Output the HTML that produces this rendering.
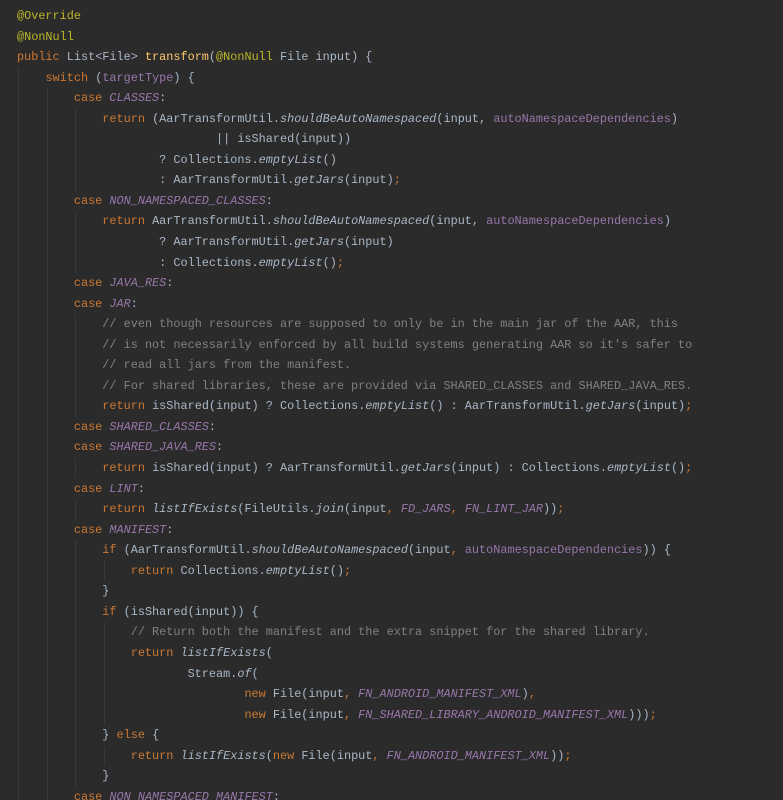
<!DOCTYPE html>
<html><head><meta charset="utf-8"><style>
html,body{margin:0;padding:0;background:#2b2b2b;width:783px;height:800px;overflow:hidden;position:relative}
pre{position:absolute;left:17px;top:6px;margin:0;font-family:"Liberation Mono",monospace;font-size:11.85px;line-height:20.55px;color:#a9b7c6;white-space:pre}
.k{color:#cc7832}.a{color:#bbb529}.m{color:#ffc66d}.p{color:#9876aa}.i{font-style:italic}.s{color:#9876aa;font-style:italic}.c{color:#808080}.f{font-style:italic}
.g{position:absolute;width:1px;background:#393939}
</style></head><body>
<div class="g" style="left:18px;top:68px;height:732px"></div>
<div class="g" style="left:47px;top:88px;height:712px"></div>
<div class="g" style="left:75px;top:109px;height:82px"></div>
<div class="g" style="left:75px;top:211px;height:62px"></div>
<div class="g" style="left:75px;top:314px;height:103px"></div>
<div class="g" style="left:75px;top:458px;height:20px"></div>
<div class="g" style="left:75px;top:499px;height:20px"></div>
<div class="g" style="left:75px;top:540px;height:247px"></div>
<div class="g" style="left:104px;top:561px;height:20px"></div>
<div class="g" style="left:104px;top:622px;height:103px"></div>
<div class="g" style="left:104px;top:746px;height:20px"></div>
<pre><span class="a">@Override</span>
<span class="a">@NonNull</span>
<span class="k">public </span>List&lt;File&gt; <span class="m">transform</span>(<span class="a">@NonNull</span> File input) {
    <span class="k">switch </span>(<span class="p">targetType</span>) {
        <span class="k">case </span><span class="s">CLASSES</span>:
            <span class="k">return </span>(AarTransformUtil.<span class="f">shouldBeAutoNamespaced</span>(input, <span class="p">autoNamespaceDependencies</span>)
                            || isShared(input))
                    ? Collections.<span class="f">emptyList</span>()
                    : AarTransformUtil.<span class="f">getJars</span>(input)<span class="k">;</span>
        <span class="k">case </span><span class="s">NON_NAMESPACED_CLASSES</span>:
            <span class="k">return </span>AarTransformUtil.<span class="f">shouldBeAutoNamespaced</span>(input, <span class="p">autoNamespaceDependencies</span>)
                    ? AarTransformUtil.<span class="f">getJars</span>(input)
                    : Collections.<span class="f">emptyList</span>()<span class="k">;</span>
        <span class="k">case </span><span class="s">JAVA_RES</span>:
        <span class="k">case </span><span class="s">JAR</span>:
            <span class="c">// even though resources are supposed to only be in the main jar of the AAR, this</span>
            <span class="c">// is not necessarily enforced by all build systems generating AAR so it's safer to</span>
            <span class="c">// read all jars from the manifest.</span>
            <span class="c">// For shared libraries, these are provided via SHARED_CLASSES and SHARED_JAVA_RES.</span>
            <span class="k">return </span>isShared(input) ? Collections.<span class="f">emptyList</span>() : AarTransformUtil.<span class="f">getJars</span>(input)<span class="k">;</span>
        <span class="k">case </span><span class="s">SHARED_CLASSES</span>:
        <span class="k">case </span><span class="s">SHARED_JAVA_RES</span>:
            <span class="k">return </span>isShared(input) ? AarTransformUtil.<span class="f">getJars</span>(input) : Collections.<span class="f">emptyList</span>()<span class="k">;</span>
        <span class="k">case </span><span class="s">LINT</span>:
            <span class="k">return </span><span class="f">listIfExists</span>(FileUtils.<span class="f">join</span>(input<span class="k">, </span><span class="s">FD_JARS</span><span class="k">, </span><span class="s">FN_LINT_JAR</span>))<span class="k">;</span>
        <span class="k">case </span><span class="s">MANIFEST</span>:
            <span class="k">if </span>(AarTransformUtil.<span class="f">shouldBeAutoNamespaced</span>(input<span class="k">, </span><span class="p">autoNamespaceDependencies</span>)) {
                <span class="k">return </span>Collections.<span class="f">emptyList</span>()<span class="k">;</span>
            }
            <span class="k">if </span>(isShared(input)) {
                <span class="c">// Return both the manifest and the extra snippet for the shared library.</span>
                <span class="k">return </span><span class="f">listIfExists</span>(
                        Stream.<span class="f">of</span>(
                                <span class="k">new </span>File(input<span class="k">, </span><span class="s">FN_ANDROID_MANIFEST_XML</span>)<span class="k">,</span>
                                <span class="k">new </span>File(input<span class="k">, </span><span class="s">FN_SHARED_LIBRARY_ANDROID_MANIFEST_XML</span>)))<span class="k">;</span>
            } <span class="k">else </span>{
                <span class="k">return </span><span class="f">listIfExists</span>(<span class="k">new </span>File(input<span class="k">, </span><span class="s">FN_ANDROID_MANIFEST_XML</span>))<span class="k">;</span>
            }
        <span class="k">case </span><span class="s">NON_NAMESPACED_MANIFEST</span>:</pre>
</body></html>
